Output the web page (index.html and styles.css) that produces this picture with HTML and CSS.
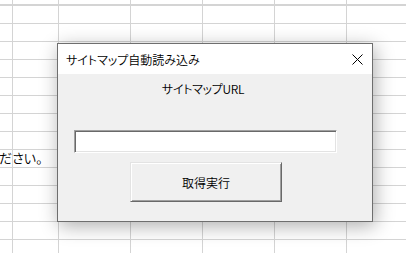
FILE: index.html
```html
<!DOCTYPE html>
<html lang="ja">
<head>
    <meta charset="UTF-8">
    <meta name="viewport" content="width=device-width, initial-scale=1.0">
    <title>サイトマップ自動読み込み</title>
    <link rel="stylesheet" href="styles.css">
</head>
<body>
    <div class="sheet">
        <div class="cell-text">ださい。</div>
    </div>

    <div class="dialog">
        <div class="title-bar">
            <span class="title">サイトマップ自動読み込み</span>
            <span class="close">
                <svg width="11" height="11" viewBox="0 0 11 11">
                    <path d="M0.5 0.5 L10.5 10.5 M10.5 0.5 L0.5 10.5" stroke="#000" stroke-width="1" fill="none"/>
                </svg>
            </span>
        </div>
        <div class="content">
            <div class="label">サイトマップURL</div>
            <input type="text" class="url-box">
            <button type="button" class="run-btn">取得実行</button>
        </div>
    </div>
</body>
</html>
```

FILE: styles.css
```css
html, body {
    margin: 0;
    padding: 0;
}
body {
    width: 406px;
    height: 253px;
    overflow: hidden;
    position: relative;
    background: #fff;
    font-family: "Noto Sans CJK JP", "Noto Sans", sans-serif;
    font-feature-settings: "palt";
    font-weight: 350;
    color: #000;
}
.sheet {
    height: 253px;
    background-color: #fff;
    background-image:
        repeating-linear-gradient(to bottom, #d4d4d4 0 1px, transparent 1px 18px),
        repeating-linear-gradient(to right, #d4d4d4 0 1px, transparent 1px 72px);
    background-position: 0 5px, 58px 0;
    overflow: hidden;
}
.cell-text {
    padding-top: 149px;
    height: 18px;
    line-height: 18px;
    font-size: 13px;
    margin-left: -1px;
}
.dialog {
    position: absolute;
    left: 57px;
    top: 43px;
    width: 314px;
    height: 177px;
    border: 1px solid #6e6e6e;
    background: #f0f0f0;
    box-shadow: 2px 4px 18px rgba(0, 0, 0, 0.32);
}
.title-bar {
    height: 30px;
    background: #fff;
    display: flex;
    align-items: center;
    justify-content: space-between;
    padding: 0 9px 0 8px;
}
.title {
    font-size: 12px;
    line-height: 16px;
    margin-top: 1px;
}
.close {
    display: flex;
}
.content {
    display: flex;
    flex-direction: column;
    align-items: flex-start;
}
.label {
    margin: 7px 0 0 16px;
    width: 258px;
    text-align: center;
    font-size: 12px;
    line-height: 16px;
    letter-spacing: -0.3px;
}
.url-box {
    box-sizing: border-box;
    margin: 33px 0 0 16px;
    width: 263px;
    height: 23px;
    padding: 0;
    background: #fff;
    border-top: 1px solid #a0a0a0;
    border-left: 1px solid #a0a0a0;
    border-right: 1px solid #fff;
    border-bottom: 1px solid #fff;
    box-shadow: inset 1px 1px 0 #696969, inset -1px -1px 0 #e3e3e3;
    outline: none;
}
.run-btn {
    box-sizing: border-box;
    margin: 9px 0 0 72px;
    width: 152px;
    height: 40px;
    padding: 0;
    background: #f0f0f0;
    border-top: 1px solid #e3e3e3;
    border-left: 1px solid #e3e3e3;
    border-right: 1px solid #696969;
    border-bottom: 1px solid #696969;
    box-shadow: inset 1px 1px 0 #fff, inset -1px -1px 0 #a0a0a0;
    font-family: "Noto Sans CJK JP", "Noto Sans", sans-serif;
    font-weight: 350;
    font-size: 12px;
    color: #000;
}
```
